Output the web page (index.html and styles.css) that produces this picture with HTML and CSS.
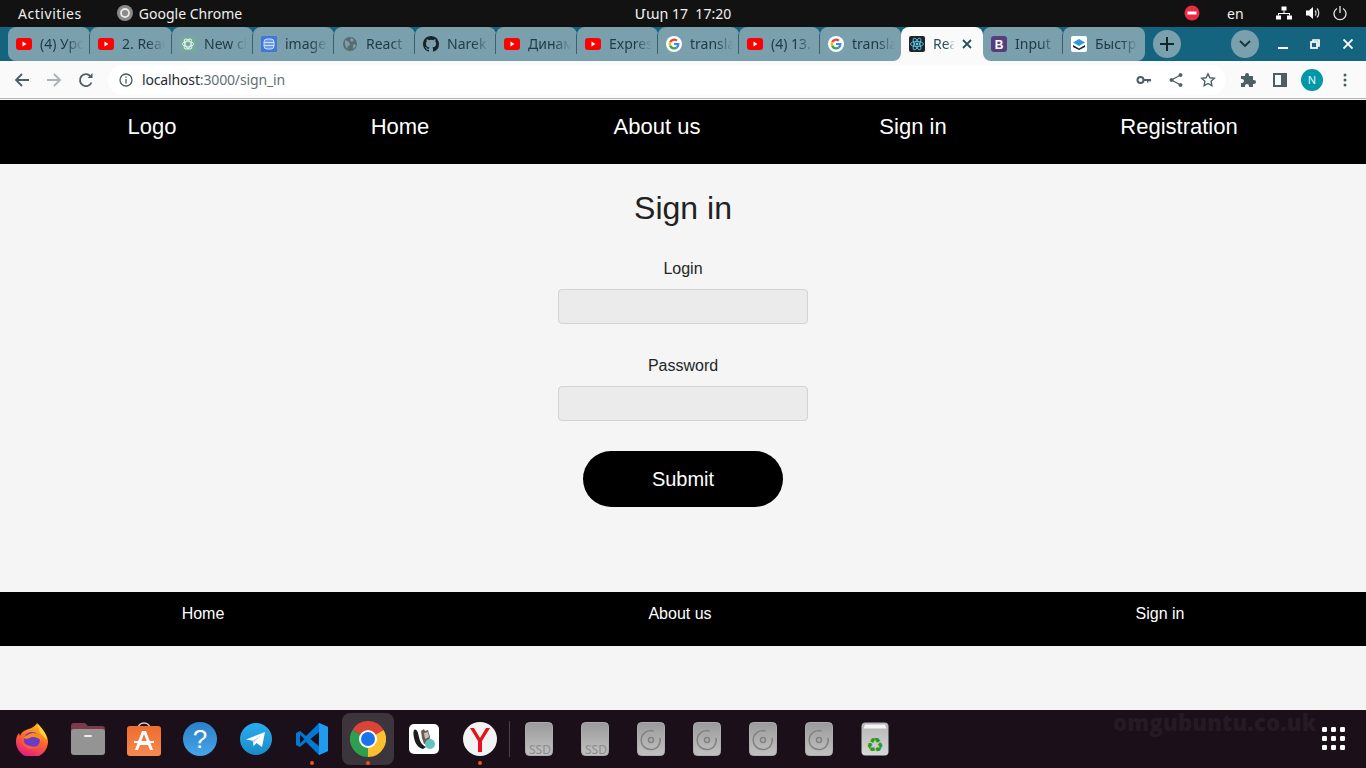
FILE: index.html
```html
<!DOCTYPE html>
<html lang="en">
<head>
<meta charset="utf-8">
<title>Sign in</title>
<link rel="stylesheet" href="styles.css">
</head>
<body>
<svg class="defs" width="0" height="0" aria-hidden="true">
  <symbol id="yt" viewBox="0 0 16 16"><rect y="2" width="16" height="12" rx="3" fill="#f00"/><path d="M6.500 5.500v5l4-2.500z" fill="#fff"/></symbol>
  <symbol id="gg" viewBox="0 0 16 16"><circle cx="8" cy="8" r="8" fill="#fff"/><g transform="translate(8 8) scale(1.350) translate(-8 -8)"><path d="M4.400 6.200A4 4 0 0 1 10.700 5L9.500 6.200A2.300 2.300 0 0 0 5.900 7.100z" fill="#ea4335"/><path d="M4.400 6.200l1.500 1.100a2.300 2.300 0 0 0 0 1.400l-1.500 1.100a4 4 0 0 1 0-3.600z" fill="#fbbc05"/><path d="M4.400 9.800l1.500-1.100A2.300 2.300 0 0 0 9.300 10l1.400 1.100A4 4 0 0 1 4.400 9.800z" fill="#34a853"/><path d="M8 7.200h4c.2 1.600-.3 3-1.300 3.900L9.300 10c.5-.4.800-.8.900-1.300H8z" fill="#4285f4"/></g></symbol>
  <symbol id="ssd" viewBox="0 0 28 34"><defs><linearGradient id="dg" x1="0" y1="0" x2="0" y2="1"><stop offset="0" stop-color="#9a9a9a"/><stop offset="1" stop-color="#c2c2c2"/></linearGradient></defs><rect x=".5" y=".5" width="27" height="33" rx="4" fill="url(#dg)" stroke="#adadad"/></symbol>
  <symbol id="cd" viewBox="0 0 28 34"><rect x=".5" y=".5" width="27" height="33" rx="4" fill="url(#dg)" stroke="#adadad"/><path d="M23 16a9.500 9.500 0 1 1-6.500-7" fill="none" stroke="#828282" stroke-width="1.500"/><circle cx="14" cy="18" r="2.500" fill="none" stroke="#828282" stroke-width="1.500"/></symbol>
</svg>

<div class="topbar">
  <div class="topbar-left">
    <span class="activities">Activities</span>
    <svg class="app-ic" width="16" height="16" viewBox="0 0 16 16"><circle cx="8" cy="8" r="8" fill="#8a8a8a"/><circle cx="8" cy="8" r="4" fill="none" stroke="#e8e8e8" stroke-width="1.800"/></svg>
    <span>Google Chrome</span>
  </div>
  <div class="clock">Մար 17&nbsp;&nbsp;17:20</div>
  <div class="topbar-right">
    <svg class="ind-red" width="16" height="16" viewBox="0 0 16 16"><circle cx="8" cy="8" r="7.500" fill="#ed2b45"/><rect x="3.500" y="6.500" width="9" height="3" fill="#fff"/></svg>
    <span class="lang">en</span>
    <svg class="ind-net" width="16" height="16" viewBox="0 0 16 16" fill="#fff"><rect x="5.500" y="1.500" width="5" height="4"/><rect y="10.500" width="5" height="4"/><rect x="11" y="10.500" width="5" height="4"/><path d="M7.500 5.500h1v2.500h5.500v2.500h-1V9H3v1.500H2V8h5.500z"/></svg>
    <svg class="ind-vol" width="16" height="16" viewBox="0 0 16 16" fill="none"><path d="M1 5.500h3L8 2v12L4 10.500H1z" fill="#fff"/><path d="M10 5.500a3.500 3.500 0 0 1 0 5M12 3.500a6.500 6.500 0 0 1 0 9" stroke="#ddd" stroke-width="1.200"/></svg>
    <svg class="ind-pow" width="14" height="16" viewBox="0 0 14 16" fill="none" stroke="#e6e6e6" stroke-width="1.300"><path d="M7 1v7"/><path d="M4 3.500a6 6 0 1 0 6 0"/></svg>
  </div>
</div>

<div class="tabstrip">
  <div class="tab tab-first tab-wide"><svg class="fav"><use href="#yt"/></svg><span class="tab-text">(4) Уроки</span></div>
  <div class="tab tab-wide"><svg class="fav"><use href="#yt"/></svg><span class="tab-text">2. React</span></div>
  <div class="tab"><svg class="fav" viewBox="0 0 16 16"><rect width="16" height="16" rx="3" fill="#74aa9c"/><g fill="none" stroke="#e6f0ed" stroke-width=".9"><ellipse cx="8" cy="8" rx="5.500" ry="2.800"/><ellipse cx="8" cy="8" rx="5.500" ry="2.800" transform="rotate(60 8 8)"/><ellipse cx="8" cy="8" rx="5.500" ry="2.800" transform="rotate(120 8 8)"/></g></svg><span class="tab-text">New chat</span></div>
  <div class="tab"><svg class="fav" viewBox="0 0 16 16"><rect width="16" height="16" rx="1.500" fill="#3f78d8"/><rect x="3" y="3" width="10" height="10" rx="3" fill="#6f9ae6" stroke="#cfe0fb"/><path d="M3 6.500h10M3 9.500h10" stroke="#cfe0fb"/></svg><span class="tab-text">images</span></div>
  <div class="tab"><svg class="fav" viewBox="0 0 16 16"><circle cx="8" cy="8" r="7" fill="#5a6a6e"/><path d="M3 4l4 2 1 3-2 1-1 3-2-4zM9 2l3 2-2 2-2-2zM11 9l2-1 1 2-3 3z" fill="#7a9fad"/></svg><span class="tab-text">React</span></div>
  <div class="tab"><svg class="fav" viewBox="0 0 16 16"><path fill="#16242a" d="M8 0C3.580 0 0 3.580 0 8c0 3.540 2.290 6.530 5.470 7.590.4.070.55-.17.55-.38 0-.19-.01-.82-.01-1.490-2.010.37-2.530-.49-2.690-.94-.09-.23-.48-.94-.82-1.130-.28-.15-.68-.52-.01-.53.63-.01 1.080.58 1.230.82.720 1.210 1.870.87 2.330.66.070-.52.280-.87.510-1.070-1.780-.2-3.640-.89-3.640-3.950 0-.87.310-1.590.82-2.150-.08-.2-.36-1.020.08-2.120 0 0 .67-.21 2.200.82a7.420 7.420 0 0 1 4 0c1.530-1.040 2.200-.82 2.200-.82.440 1.100.16 1.920.08 2.120.51.560.82 1.270.82 2.150 0 3.070-1.870 3.750-3.650 3.950.29.250.54.730.54 1.480 0 1.070-.01 1.930-.01 2.200 0 .21.150.46.550.38A8.010 8.010 0 0 0 16 8c0-4.420-3.580-8-8-8z"/></svg><span class="tab-text">Narek</span></div>
  <div class="tab"><svg class="fav"><use href="#yt"/></svg><span class="tab-text">Динами</span></div>
  <div class="tab"><svg class="fav"><use href="#yt"/></svg><span class="tab-text">Express</span></div>
  <div class="tab"><svg class="fav"><use href="#gg"/></svg><span class="tab-text">translate</span></div>
  <div class="tab"><svg class="fav"><use href="#yt"/></svg><span class="tab-text">(4) 13.</span></div>
  <div class="tab tab-before"><svg class="fav"><use href="#gg"/></svg><span class="tab-text">translate</span></div>
  <div class="tab tab-active tab-wide"><svg class="fav" viewBox="0 0 16 16"><rect width="16" height="16" rx="2" fill="#20232a"/><g fill="none" stroke="#61dafb" stroke-width=".8"><ellipse cx="8" cy="8" rx="6.500" ry="2.500"/><ellipse cx="8" cy="8" rx="6.500" ry="2.500" transform="rotate(60 8 8)"/><ellipse cx="8" cy="8" rx="6.500" ry="2.500" transform="rotate(120 8 8)"/></g><circle cx="8" cy="8" r="1.300" fill="#61dafb"/></svg><span class="tab-text tab-text-active">React</span>
    <svg class="tab-close" width="10" height="10" viewBox="0 0 10 10" stroke="#25505e" stroke-width="1.800"><path d="M1 1l8 8M9 1l-8 8"/></svg></div>
  <div class="tab tab-after"><svg class="fav" viewBox="0 0 16 16"><rect width="16" height="16" rx="3" fill="#563d7c"/><text x="8" y="12.500" text-anchor="middle" class="boot">B</text></svg><span class="tab-text">Input</span></div>
  <div class="tab tab-last tab-wide"><svg class="fav" viewBox="0 0 16 16"><rect width="16" height="16" rx="2" fill="#fff"/><path d="M8 3l6 3.500L8 10 2 6.500z" fill="#2a9ad8"/><path d="M2 9l6 3.500L14 9v2l-6 3-6-3z" fill="#16242a"/></svg><span class="tab-text">Быстрый</span></div>
  <div class="round-btn plus-btn"><svg width="14" height="14" viewBox="0 0 14 14" stroke="#15242a" stroke-width="2"><path d="M7 0v14M0 7h14"/></svg></div>
  <div class="round-btn down-btn"><svg width="12" height="8" viewBox="0 0 12 8" fill="none" stroke="#15343f" stroke-width="1.800"><path d="M1 1l5 5 5-5"/></svg></div>
  <div class="win-ctl">
    <svg class="win-min" width="10" height="10" viewBox="0 0 10 10"><rect y="8" width="10" height="2" fill="#fff"/></svg>
    <svg class="win-max" width="10" height="10" viewBox="0 0 10 10" fill="none" stroke="#fff" stroke-width="1.700"><path d="M3 3V1h6v6H7"/><rect x="1" y="3" width="6" height="6"/></svg>
    <svg class="win-x" width="10" height="10" viewBox="0 0 10 10" stroke="#fff" stroke-width="1.900"><path d="M.5.500l9 9M9.500.500l-9 9"/></svg>
  </div>
</div>

<div class="toolbar">
  <svg class="tb-back" width="16" height="16" viewBox="0 0 16 16" fill="none" stroke="#4c5f64" stroke-width="1.800"><path d="M15 8H2M8 2L2 8l6 6"/></svg>
  <svg class="tb-fwd" width="16" height="16" viewBox="0 0 16 16" fill="none" stroke="#a9b4b7" stroke-width="1.800"><path d="M1 8h13M8 2l6 6-6 6"/></svg>
  <svg class="tb-rel" width="16" height="16" viewBox="0 0 16 16" fill="none" stroke="#4c5f64" stroke-width="1.800"><path d="M13.500 10.500A6 6 0 1 1 12.300 4"/><path d="M14.500 1v5h-5z" fill="#4c5f64" stroke="none"/></svg>
  <div class="omnibox">
    <svg class="info" width="14" height="14" viewBox="0 0 14 14" fill="none" stroke="#4c5a5e" stroke-width="1.300"><circle cx="7" cy="7" r="6"/><path d="M7 6v4.500M7 3.500v1.300"/></svg>
    <span class="url"><span class="url-host">localhost</span>:3000/sign_in</span>
    <div class="omni-right">
      <svg width="16" height="16" viewBox="0 0 16 16" fill="none"><circle cx="4.500" cy="8" r="3" stroke="#4c5f64" stroke-width="2"/><path d="M7 7h8v2.500h-1.500V9h-1v1.500H11V9H7z" fill="#4c5f64"/></svg>
      <svg width="16" height="16" viewBox="0 0 16 16" fill="#4c5f64" stroke="#4c5f64"><path d="M12.500 3L3.500 8l9 5" fill="none" stroke-width="1.300"/><circle cx="12.500" cy="3" r="1.500"/><circle cx="3.500" cy="8" r="1.500"/><circle cx="12.500" cy="13" r="1.500"/></svg>
      <svg width="16" height="16" viewBox="0 0 16 16" fill="none" stroke="#4c5f64" stroke-width="1.400"><path d="M8 1.800l1.900 4 4.400.5-3.200 3 .8 4.400L8 11.500l-3.900 2.200.8-4.400-3.200-3 4.400-.5z"/></svg>
    </div>
  </div>
  <svg class="tb-ext" width="16" height="16" viewBox="0 0 16 16" fill="#4c5f64"><path d="M1 4h4V3a2 2 0 0 1 4 0v1h4v4h1a2 2 0 0 1 0 4h-1v3H9v-1a2 2 0 0 0-4 0v1H1v-4h1a2 2 0 0 0 0-4H1z"/></svg>
  <svg class="tb-side" width="14" height="14" viewBox="0 0 14 14"><rect x="1" y="1" width="12" height="12" fill="none" stroke="#4c5f64" stroke-width="2"/><rect x="8" y="1" width="5" height="12" fill="#4c5f64"/></svg>
  <div class="avatar">N</div>
  <svg class="tb-dots" width="4" height="14" viewBox="0 0 4 14" fill="#4c5f64"><circle cx="2" cy="2" r="1.500"/><circle cx="2" cy="7" r="1.500"/><circle cx="2" cy="12" r="1.500"/></svg>
</div>
<div class="toolbar-line"></div>

<header class="site-nav">
  <a class="nav-item">Logo</a>
  <a class="nav-item">Home</a>
  <a class="nav-item">About us</a>
  <a class="nav-item">Sign in</a>
  <a class="nav-item">Registration</a>
</header>

<main class="site-main">
  <h1 class="title">Sign in</h1>
  <form class="form">
    <label class="label">Login</label>
    <input class="input" type="text">
    <label class="label label-gap">Password</label>
    <input class="input" type="password">
    <button class="submit" type="button">Submit</button>
  </form>
</main>

<footer class="site-foot">
  <a class="foot-item">Home</a>
  <a class="foot-item">About us</a>
  <a class="foot-item">Sign in</a>
</footer>
<div class="page-rest"></div>

<div class="dock">
  <div class="dock-item"><svg width="34" height="34" viewBox="0 0 34 34"><defs><linearGradient id="ff" x1=".7" y1="0" x2=".3" y2="1"><stop offset="0" stop-color="#ffc21a"/><stop offset=".45" stop-color="#ff6a2a"/><stop offset="1" stop-color="#e31587"/></linearGradient></defs><path d="M22 1c1 4 6 6 8 10 2 3 3 6 3 9a16 16 0 1 1-32-1c0-3 1-6 3-8l1 3c1-3 3-5 6-6 3-1 9-3 11-7z" fill="url(#ff)"/><path d="M22 1c4 4 9 9 10 17l-7-7z" fill="#ffd23a"/><circle cx="17" cy="18" r="8" fill="#6a3bc7"/><path d="M8 15c3 0 6-4 10-4 5 0 8 3 8 8-2-3-5-4-8-4-4 0-6 4-10 0z" fill="#ff8a1c"/><path d="M6 17c1 6 5 10 11 10 4 0 7-2 8-4-3 2-7 2-10 1-4-1-7-3-9-7z" fill="#ff5b3a"/></svg></div>
  <div class="dock-item"><svg width="34" height="32" viewBox="0 0 34 32"><path d="M3 0h11l3 3h14a3 3 0 0 1 3 3v6H0V3a3 3 0 0 1 3-3z" fill="#7d3a4a"/><rect y="6" width="34" height="26" rx="3" fill="#949494"/><rect x="13" y="12" width="8" height="2" rx="1" fill="#eee"/></svg></div>
  <div class="dock-item"><svg width="34" height="34" viewBox="0 0 34 34"><defs><linearGradient id="ac" x1="0" y1="0" x2="0" y2="1"><stop offset="0" stop-color="#ef6c2e"/><stop offset="1" stop-color="#f58a50"/></linearGradient></defs><path d="M11 6a6 5 0 0 1 12 0" fill="none" stroke="#e0d0c0" stroke-width="1.400"/><rect y="4" width="34" height="30" rx="3" fill="url(#ac)"/><path d="M15 9h4l7 19h-3l-2-5h-8l-2 5H8zM17 12l-3 8h6z" fill="#fff"/><rect x="7" y="19" width="20" height="2" fill="#fff"/></svg></div>
  <div class="dock-item"><svg width="34" height="34" viewBox="0 0 34 34"><defs><linearGradient id="hp" x1="0" y1="0" x2="0" y2="1"><stop offset="0" stop-color="#2a7fc9"/><stop offset="1" stop-color="#45a6e8"/></linearGradient></defs><circle cx="17" cy="17" r="17" fill="url(#hp)"/><text x="17" y="26" text-anchor="middle" class="help">?</text></svg></div>
  <div class="dock-item"><svg width="32" height="32" viewBox="0 0 32 32"><defs><linearGradient id="tg" x1="0" y1="0" x2="0" y2="1"><stop offset="0" stop-color="#2aabee"/><stop offset="1" stop-color="#1a8cc8"/></linearGradient></defs><circle cx="16" cy="16" r="16" fill="url(#tg)"/><path d="M6 16.500L25 9l-3 15-5.500-4-3 3-.8-5.200z" fill="#fff"/><path d="M12.700 17.800L21 12l-6.500 7-.8 3.500z" fill="#c8daea"/></svg></div>
  <div class="dock-item"><svg width="32" height="32" viewBox="0 0 32 32"><path d="M23 0l9 4v24l-9 4-13-13-6 5-4-2v-12l4-2 6 5z" fill="#0078d4"/><path d="M23 0l9 4v24l-9 4V22L13 16 23 9z" fill="#1f9cf0"/><path d="M23 9v14l-9-7z" fill="#1c1019"/><path d="M4 11.500v9l4.500-4.500z" fill="#1c1019"/></svg></div>
  <div class="dock-item dock-active"><svg width="36" height="36" viewBox="0 0 36 36"><path d="M18 18L2.400 9A18 18 0 0 1 33.600 9z" fill="#db4437"/><path d="M18 18L33.600 9A18 18 0 0 1 18 36z" fill="#fbc02d"/><path d="M18 18L18 36A18 18 0 0 1 2.400 9z" fill="#2e9e4f"/><circle cx="18" cy="18" r="9" fill="#fff"/><circle cx="18" cy="18" r="7" fill="#1a73e8"/></svg></div>
  <div class="dock-item"><svg width="30" height="30" viewBox="0 0 30 30"><rect width="30" height="30" rx="5" fill="#fff"/><path d="M5 6c2-2 4 1 5 7 1 5 3 8 7 10l-3 2c-5-1-8-6-9-11-.5-3-1-6 0-8z" fill="#1c1c1c"/><path d="M12 7l3-2 1 2 3-1 2 7-1 6-5 1-2-6z" fill="#6a5a52"/><path d="M15 9l4-1 1 5-4 2z" fill="#c9c2bb"/><circle cx="21" cy="20" r="5" fill="#5fc4c0"/></svg></div>
  <div class="dock-item"><svg width="34" height="34" viewBox="0 0 34 34"><circle cx="17" cy="17" r="17" fill="#f3f3f3"/><path d="M15 30V19L7 6h4l6 10 6-10h4l-8 13v11z" fill="#e3141e"/></svg></div>
  <div class="dock-sep"></div>
  <div class="dock-item"><svg width="28" height="34"><use href="#ssd"/></svg><span class="ssd-text">SSD</span></div>
  <div class="dock-item"><svg width="28" height="34"><use href="#ssd"/></svg><span class="ssd-text">SSD</span></div>
  <div class="dock-item"><svg width="28" height="34"><use href="#cd"/></svg></div>
  <div class="dock-item"><svg width="28" height="34"><use href="#cd"/></svg></div>
  <div class="dock-item"><svg width="28" height="34"><use href="#cd"/></svg></div>
  <div class="dock-item"><svg width="28" height="34"><use href="#cd"/></svg></div>
  <div class="dock-item"><svg width="28" height="34" viewBox="0 0 28 34"><defs><linearGradient id="tr" x1="0" y1="0" x2="0" y2="1"><stop offset="0" stop-color="#b5b5b5"/><stop offset="1" stop-color="#d8d8d8"/></linearGradient></defs><rect x=".5" y=".5" width="27" height="33" rx="4" fill="url(#tr)"/><path d="M4 2.500h20l1.500 4h-23z" fill="#f4f4f4"/></svg><span class="recycle">♻</span></div>
  <div class="watermark">omgubuntu.co.uk</div>
  <svg class="grid-ic" width="24" height="24" viewBox="0 0 24 24" fill="#fff"><rect x="0" y="0" width="5" height="5" rx="1.200"/><rect x="9" y="0" width="5" height="5" rx="1.200"/><rect x="18" y="0" width="5" height="5" rx="1.200"/><rect x="0" y="9" width="5" height="5" rx="1.200"/><rect x="9" y="9" width="5" height="5" rx="1.200"/><rect x="18" y="9" width="5" height="5" rx="1.200"/><rect x="0" y="18" width="5" height="5" rx="1.200"/><rect x="9" y="18" width="5" height="5" rx="1.200"/><rect x="18" y="18" width="5" height="5" rx="1.200"/></svg>
</div>
</body>
</html>
```

FILE: styles.css
```css
* { box-sizing: border-box; }
html, body { margin: 0; padding: 0; }
body {
  width: 1366px;
  height: 768px;
  overflow: hidden;
  display: flex;
  flex-direction: column;
  background: #f5f5f5;
  font-family: "Liberation Sans", Arial, sans-serif;
  color: #212529;
}
.defs { position: absolute; }

/* GNOME top bar */
.topbar {
  height: 27px;
  flex: none;
  background: #121212;
  color: #f0f0f0;
  font: 14px "Noto Sans", "DejaVu Sans", sans-serif;
  display: grid;
  grid-template-columns: 1fr auto 1fr;
  align-items: center;
  padding-bottom: 1px;
}
.topbar-left { display: flex; align-items: center; padding-left: 18px; }
.activities { margin-right: 35px; letter-spacing: .55px; }
.app-ic { margin-right: 6px; }
.clock { font-size: 14px; }
.topbar-right { display: flex; align-items: center; margin-left: auto; width: 182px; }
.ind-red { flex: none; }
.lang { margin-left: 27px; width: 15px; }
.ind-net { margin-left: 34px; }
.ind-vol { margin-left: 13px; }
.ind-pow { margin-left: 12px; }

/* Chrome tabs */
.tabstrip {
  height: 34px;
  flex: none;
  background: #15647f;
  display: flex;
  align-items: stretch;
  padding-left: 8px;
  font: 14px "Noto Sans", "DejaVu Sans", sans-serif;
}
.tab {
  width: 81px;
  flex: none;
  background: #7a9fad;
  border-radius: 8px 8px 0 0;
  display: flex;
  align-items: center;
  padding-left: 8px;
  color: #1f3a44;
  position: relative;
  z-index: 1;
}
.tab-wide { width: 82px; }
.tab-after { width: 80px; }
.tab::after {
  content: "";
  position: absolute;
  right: 0;
  top: 7px;
  height: 20px;
  width: 1px;
  background: #3f5f6b;
}
.tab-first { border-bottom-left-radius: 8px; }
.tab-before { border-bottom-right-radius: 8px; }
.tab-before::after, .tab-last::after, .tab-active::after { display: none; }
.tab-after { border-bottom-left-radius: 8px; }
.tab-last { border-bottom-right-radius: 8px; }
.tab-active {
  background: #fafafa;
  z-index: 0;
}
.tab-active::before {
  content: "";
  position: absolute;
  left: -8px;
  right: -8px;
  bottom: 0;
  height: 8px;
  background: #fafafa;
  z-index: -1;
}
.fav { width: 16px; height: 16px; flex: none; margin-right: 8px; }
.tab-text {
  width: 43px;
  margin-top: -2px;
  overflow: hidden;
  white-space: nowrap;
  -webkit-mask-image: linear-gradient(to right, #000 60%, transparent);
  mask-image: linear-gradient(to right, #000 60%, transparent);
}
.tab-text-active { width: 22px; color: #25505e; }
.tab-close { margin-left: 7px; flex: none; }
.boot { font: bold 12px "Liberation Sans", sans-serif; fill: #fff; }
.round-btn {
  width: 28px;
  height: 28px;
  border-radius: 50%;
  background: #7a9fad;
  display: flex;
  align-items: center;
  justify-content: center;
  align-self: center;
  flex: none;
}
.plus-btn { margin-left: 8px; }
.down-btn { margin-left: 50px; }
.win-ctl { display: flex; align-items: center; margin-left: 19px; }
.win-max { margin-left: 22px; }
.win-x { margin-left: 23px; }

/* Chrome toolbar */
.toolbar {
  height: 37px;
  flex: none;
  background: #fafafa;
  display: flex;
  align-items: center;
  padding-left: 14px;
}
.toolbar-line { height: 1px; flex: none; background: #b5b5b5; margin-bottom: 1px; }
.tb-fwd { margin-left: 16px; }
.tb-rel { margin-left: 16px; }
.omnibox {
  width: 1118px;
  height: 30px;
  margin-left: 14px;
  background: #fff;
  border-radius: 15px;
  display: flex;
  align-items: center;
  padding-left: 11px;
  flex: none;
}
.info { flex: none; }
.url {
  margin-left: 9px;
  font: 14px "Noto Sans", "DejaVu Sans", sans-serif;
  letter-spacing: -.15px;
  color: #5f6f74;
}
.url-host { color: #1f2d31; }
.omni-right { margin-left: auto; display: flex; gap: 16px; padding-right: 10px; }
.tb-ext { margin-left: 14px; }
.tb-side { margin-left: 17px; }
.avatar {
  width: 22px;
  height: 22px;
  border-radius: 50%;
  background: #0097a7;
  color: #e8fbff;
  font: 11px "Noto Sans", sans-serif;
  display: flex;
  align-items: center;
  justify-content: center;
  margin-left: 14px;
  flex: none;
}
.tb-dots { margin-left: 20px; }

/* Page */
.site-nav {
  height: 64px;
  flex: none;
  background: #000;
  display: grid;
  grid-template-columns: 304px 192px 322px 190px 342px;
  justify-items: center;
  padding-top: 13px;
  color: #fff;
  font-size: 22px;
  line-height: 28px;
}
.nav-item { display: block; }
.site-main {
  height: 428px;
  flex: none;
  display: flex;
  flex-direction: column;
  align-items: center;
}
.title {
  margin: 24px 0 0;
  font-size: 32px;
  line-height: 40px;
  font-weight: 400;
  color: #212121;
}
.form { display: flex; flex-direction: column; align-items: center; margin-top: 29px; }
.label { font-size: 16px; line-height: 24px; }
.label-gap { margin-top: 30px; }
.input {
  width: 250px;
  height: 35px;
  margin-top: 8px;
  background: #ebebeb;
  border: 1px solid #ced4da;
  border-radius: 4px;
  padding: 0;
}
.submit {
  width: 200px;
  height: 56px;
  margin-top: 30px;
  background: #000;
  color: #fff;
  border: 0;
  border-radius: 28px;
  font: 20px "Liberation Sans", Arial, sans-serif;
}
.site-foot {
  height: 54px;
  flex: none;
  background: #000;
  color: #fff;
  display: grid;
  grid-template-columns: 406px 548px 412px;
  justify-items: center;
  padding-top: 12px;
  font-size: 16px;
  line-height: 20px;
}
.page-rest { height: 64px; flex: none; background: #f5f5f5; }

/* Dock */
.dock {
  height: 58px;
  flex: none;
  background: #1b0f1a;
  display: flex;
  align-items: center;
  padding-left: 4px;
  position: relative;
}
.dock-item {
  width: 56px;
  height: 52px;
  flex: none;
  display: flex;
  align-items: center;
  justify-content: center;
  position: relative;
}
.dock-item:nth-child(6)::after,
.dock-item:nth-child(7)::after,
.dock-item:nth-child(9)::after {
  content: "";
  position: absolute;
  left: 26px;
  bottom: 0;
  width: 4px;
  height: 4px;
  border-radius: 50%;
  background: #e95420;
}
.dock-active::before {
  content: "";
  position: absolute;
  left: 2px;
  right: 2px;
  top: 0;
  bottom: 0;
  border-radius: 8px;
  background: #3d353c;
}
.dock-active svg { position: relative; }
.dock-sep { width: 1px; height: 36px; margin: 0 1px; background: #4a4249; flex: none; }
.ssd-text {
  position: absolute;
  left: 18px;
  bottom: 7px;
  font: 12px "Noto Sans", sans-serif;
  color: #8c8c8c;
}
.recycle {
  position: absolute;
  left: 0;
  right: 0;
  bottom: 9px;
  text-align: center;
  font: 20px/22px "DejaVu Sans", sans-serif;
  color: #2c9a1f;
}
.help { font: 26px "Liberation Sans", sans-serif; fill: #fff; }
.watermark {
  position: absolute;
  left: 1113px;
  top: -1px;
  font: 800 22px/26px "Open Sans", sans-serif;
  letter-spacing: .2px;
  color: #261b25;
}
.grid-ic { position: absolute; left: 1322px; top: 17px; }
```
